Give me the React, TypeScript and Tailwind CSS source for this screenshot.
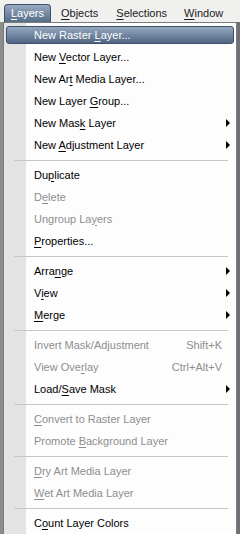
import React from "react";

type Item =
  | { sep: true }
  | {
      label: string;
      u?: number;
      disabled?: boolean;
      sub?: boolean;
      shortcut?: string;
      active?: boolean;
    };

const items: Item[] = [
  { label: "New Raster Layer...", u: 11, active: true },
  { label: "New Vector Layer...", u: 4 },
  { label: "New Art Media Layer...", u: 6 },
  { label: "New Layer Group...", u: 10 },
  { label: "New Mask Layer", u: 7, sub: true },
  { label: "New Adjustment Layer", u: 4, sub: true },
  { sep: true },
  { label: "Duplicate", u: 2 },
  { label: "Delete", u: 1, disabled: true },
  { label: "Ungroup Layers", u: 10, disabled: true },
  { label: "Properties...", u: 0 },
  { sep: true },
  { label: "Arrange", u: 4, sub: true },
  { label: "View", u: 1, sub: true },
  { label: "Merge", u: 0, sub: true },
  { sep: true },
  { label: "Invert Mask/Adjustment", disabled: true, shortcut: "Shift+K" },
  { label: "View Overlay", u: 8, disabled: true, shortcut: "Ctrl+Alt+V" },
  { label: "Load/Save Mask", u: 5, sub: true },
  { sep: true },
  { label: "Convert to Raster Layer", u: 0, disabled: true },
  { label: "Promote Background Layer", u: 8, disabled: true },
  { sep: true },
  { label: "Dry Art Media Layer", u: 0, disabled: true },
  { label: "Wet Art Media Layer", u: 0, disabled: true },
  { sep: true },
  { label: "Count Layer Colors", u: 1 },
];

function Mnemonic({ text, u }: { text: string; u?: number }) {
  if (u === undefined) return <>{text}</>;
  return (
    <>
      {text.slice(0, u)}
      <span className="underline underline-offset-2">{text[u]}</span>
      {text.slice(u + 1)}
    </>
  );
}

export default function App() {
  return (
    <div
      className="w-[240px] h-[534px] overflow-hidden bg-[#7d7f86] text-[11px] leading-none text-black"
      style={{ fontFamily: '"Liberation Sans", Arial, sans-serif' }}
    >
      {/* menu bar */}
      <div className="h-[22px] bg-[#f0f0ee] flex items-end whitespace-nowrap overflow-hidden">
        <div className="shrink-0 ml-[4px] w-[47px] h-[18px] rounded-t-[4px] border border-b-0 border-[#3f5169] bg-gradient-to-b from-[#98aac0] to-[#566d89] text-white flex items-center justify-center">
          <Mnemonic text="Layers" u={0} />
        </div>
        <div className="shrink-0 h-[18px] flex items-center text-[#1a1a1a]">
          <span className="ml-[10px]">
            <Mnemonic text="Objects" u={0} />
          </span>
          <span className="ml-[18px]">
            <Mnemonic text="Selections" u={0} />
          </span>
          <span className="ml-[17px]">
            <Mnemonic text="Window" u={0} />
          </span>
          <span className="ml-[17px]">
            <Mnemonic text="H" u={0} />
          </span>
        </div>
      </div>

      <div className="flex">
        <div className="w-[3px] shrink-0 bg-[#8c8c8c]" />
        {/* dropdown */}
        <div className="w-[234px] shrink-0 border border-[#7b7b7b] pt-[1px] bg-[linear-gradient(to_right,#e3e3e3_22px,#fdfdfd_22px)]">
          {items.map((it, i) =>
            "sep" in it ? (
              <div key={i} className="h-[8px] flex items-center">
                <div className="ml-[10px] mr-[8px] flex-1 h-px bg-[#c6c6c6]" />
              </div>
            ) : (
              <div key={i} className="h-[22px] p-[2px]">
                <div
                  className={
                    "h-full flex items-center pl-[27px] pr-[2px] rounded-[3px] " +
                    (it.active
                      ? "border border-[#3e5068] bg-gradient-to-b from-[#95a8bf] to-[#506682] text-white"
                      : "border border-transparent " + (it.disabled ? "text-[#8e8e8e]" : "text-black"))
                  }
                >
                  <span className="flex-1 whitespace-nowrap">
                    <Mnemonic text={it.label} u={it.u} />
                  </span>
                  {it.shortcut && <span className="mr-[9px]">{it.shortcut}</span>}
                  {it.sub && (
                    <span className="w-0 h-0 border-y-[4px] border-l-[4px] border-y-transparent border-l-black mr-[1px]" />
                  )}
                </div>
              </div>
            )
          )}
        </div>
        <div className="w-[3px] shrink-0 bg-[#6e7078]" />
      </div>
    </div>
  );
}
